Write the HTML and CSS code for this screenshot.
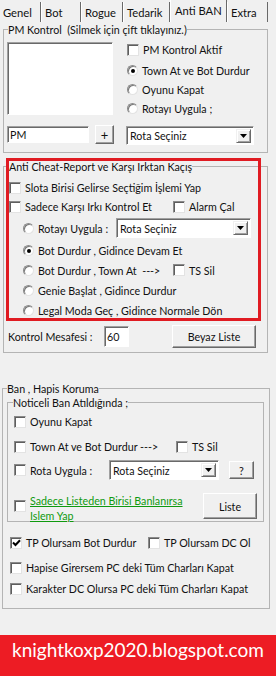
FILE: index.html
```html
<!DOCTYPE html>
<html lang="tr">
<head>
    <meta charset="UTF-8">
    <title>Anti BAN</title>
    <link rel="stylesheet" href="styles.css">
</head>
<body>
    <div class="tabs">
        <span class="tab">Genel</span>
        <span class="tab">Bot</span>
        <span class="tab">Rogue</span>
        <span class="tab">Tedarik</span>
        <span class="tab active">Anti BAN</span>
        <span class="tab">Extra</span>
    </div>

    <div class="page">
        <!-- PM kontrol -->
        <fieldset class="group pm">
            <legend>PM Kontrol&nbsp; (Silmek için çift tıklayınız.)</legend>
            <div class="pm-top">
                <div class="listbox"></div>
                <div class="opts">
                    <div class="row first"><span class="cb"></span>PM Kontrol Aktif</div>
                    <div class="row"><span class="rd on"></span>Town At ve Bot Durdur</div>
                    <div class="row"><span class="rd"></span>Oyunu Kapat</div>
                    <div class="row"><span class="rd"></span>Rotayı Uygula ;</div>
                </div>
            </div>
            <div class="pm-bottom">
                <span class="edit pm-edit">PM</span>
                <span class="btn plus">+</span>
                <span class="combo pm-combo">
                    <span class="combo-text">Rota Seçiniz</span>
                    <span class="drop"><svg width="7" height="4" viewBox="0 0 7 4"><path d="M0 0h7L3.5 4z"/></svg></span>
                </span>
            </div>
        </fieldset>

        <!-- anti cheat -->
        <fieldset class="group anti">
            <legend>Anti Cheat-Report ve Karşı Irktan Kaçış</legend>
            <div class="row chk"><span class="cb"></span>Slota Birisi Gelirse Seçtiğim İşlemi Yap</div>
            <div class="row chk">
                <span class="cell w-anti"><span class="cb"></span>Sadece Karşı Irkı Kontrol Et</span>
                <span class="cb"></span>Alarm Çal
            </div>
            <div class="row radio combo-row">
                <span class="cell w-rota"><span class="rd"></span>Rotayı Uygula :</span>
                <span class="combo anti-combo">
                    <span class="combo-text">Rota Seçiniz</span>
                    <span class="drop"><svg width="7" height="4" viewBox="0 0 7 4"><path d="M0 0h7L3.5 4z"/></svg></span>
                </span>
            </div>
            <div class="row radio"><span class="rd on"></span>Bot Durdur , Gidince Devam Et</div>
            <div class="row radio">
                <span class="cell w-town"><span class="rd"></span>Bot Durdur , Town At&nbsp; ---&gt;</span>
                <span class="cb"></span>TS Sil
            </div>
            <div class="row radio"><span class="rd"></span>Genie Başlat , Gidince Durdur</div>
            <div class="row radio"><span class="rd"></span>Legal Moda Geç , Gidince Normale Dön</div>
            <div class="mesafe">
                <span class="mesafe-label">Kontrol Mesafesi :</span>
                <span class="edit mesafe-edit">60</span>
                <span class="btn beyaz">Beyaz Liste</span>
            </div>
        </fieldset>

        <!-- ban / hapis -->
        <fieldset class="group ban">
            <legend>Ban , Hapis Koruma</legend>
            <fieldset class="group noticeli">
                <legend>Noticeli Ban Atıldığında ;</legend>
                <div class="row n1"><span class="cb"></span>Oyunu Kapat</div>
                <div class="row n2">
                    <span class="cell w-ntown"><span class="cb"></span>Town At ve Bot Durdur ---&gt;</span>
                    <span class="cb"></span>TS Sil
                </div>
                <div class="row n3">
                    <span class="cell w-nrota"><span class="cb"></span>Rota Uygula :</span>
                    <span class="combo ban-combo">
                        <span class="combo-text">Rota Seçiniz</span>
                        <span class="drop"><svg width="7" height="4" viewBox="0 0 7 4"><path d="M0 0h7L3.5 4z"/></svg></span>
                    </span>
                    <span class="btn soru">?</span>
                </div>
                <div class="row n4">
                    <span class="cb"></span>
                    <a class="link">Sadece Listeden Birisi Banlanırsa <br>Islem Yap</a>
                    <span class="btn liste">Liste</span>
                </div>
            </fieldset>
            <div class="row b1">
                <span class="cell w-tp"><span class="cb on"><svg width="9" height="8" viewBox="0 0 9 8"><path d="M1 3.5l2.5 2.5L8 1.2" fill="none" stroke="#000" stroke-width="2"/></svg></span>TP Olursam Bot Durdur</span>
                <span class="cb"></span>TP Olursam DC Ol
            </div>
            <div class="row b2"><span class="cb"></span>Hapise Girersem PC deki Tüm Charları Kapat</div>
            <div class="row b3"><span class="cb"></span>Karakter DC Olursa PC deki Tüm Charları Kapat</div>
        </fieldset>

        <div class="redbox"></div>
    </div>

    <div class="banner">knightkoxp2020.blogspot.com</div>
</body>
</html>
```

FILE: styles.css
```css
* {
    box-sizing: border-box;
}
body {
    margin: 0;
    width: 276px;
    height: 676px;
    overflow: hidden;
    background: #f0f0f0;
    font-family: Lato, "Open Sans", sans-serif;
    font-size: 10.7px;
    color: #111;
}

/* tabs */
.tabs {
    display: flex;
    height: 22px;
    font-size: 11.2px;
}
.tab {
    height: 20px;
    margin-top: 2px;
    padding: 3px 0 0 3px;
    line-height: 16px;
    border-left: 1px solid #fff;
    border-right: 1px solid #696969;
}
.tab:nth-child(1) { width: 41px; border-left: none; }
.tab:nth-child(2) { width: 40px; }
.tab:nth-child(3) { width: 42px; }
.tab:nth-child(4) { width: 47px; }
.tab:nth-child(5) { width: 57px; }
.tab:nth-child(6) { width: 41px; }
.tab.active {
    height: 22px;
    margin-top: 0;
    padding-top: 3px;
    padding-left: 4px;
}

.page {
    position: relative;
    padding: 0 0 0 3px;
}

/* group boxes */
.group {
    margin: 0;
    border: 1px solid #b4b4b4;
    min-width: 0;
}
.group legend {
    padding: 0;
    line-height: 15px;
}

.row {
    display: flex;
    align-items: center;
    height: 19px;
    white-space: nowrap;
}
.cell {
    display: flex;
    align-items: center;
}

/* controls */
.cb {
    display: inline-flex;
    align-items: center;
    justify-content: center;
    flex: none;
    width: 12px;
    height: 12px;
    margin-right: 4px;
    background: #fff;
    border: 1px solid;
    border-color: #8a8a8a #e3e3e3 #e3e3e3 #8a8a8a;
    box-shadow: inset 1px 1px 0 #5e5e5e;
}
.rd {
    position: relative;
    flex: none;
    width: 11px;
    height: 11px;
    margin-right: 4px;
    border-radius: 50%;
    background: #fff;
    border: 1px solid;
    border-color: #8a8a8a #e3e3e3 #e3e3e3 #8a8a8a;
    box-shadow: inset 1px 1px 0 #7a7a7a;
}
.rd.on::after {
    content: "";
    position: absolute;
    left: 3px;
    top: 3px;
    width: 4px;
    height: 4px;
    border-radius: 50%;
    background: #000;
}
.edit,
.listbox {
    display: flex;
    align-items: center;
    padding-left: 2px;
    background: #fff;
    border: 1px solid;
    border-color: #a0a0a0 #fff #fff #a0a0a0;
    box-shadow: inset 1px 1px 0 #696969;
}
.btn {
    display: flex;
    align-items: center;
    justify-content: center;
    flex: none;
    background: #f0f0f0;
    border: 1px solid;
    border-color: #fff #696969 #696969 #fff;
    box-shadow: inset -1px -1px 0 #a0a0a0;
}
.combo {
    display: flex;
    align-items: center;
    flex: none;
    height: 20px;
    padding: 2px 2px 2px 3px;
    background: #fff;
    border: 1px solid;
    border-color: #a0a0a0 #fff #fff #a0a0a0;
    box-shadow: inset 1px 1px 0 #696969;
}
.combo-text {
    flex: 1;
}
.drop {
    display: flex;
    align-items: center;
    justify-content: center;
    width: 15px;
    height: 14px;
    background: #f0f0f0;
    border: 1px solid;
    border-color: #f0f0f0 #696969 #696969 #f0f0f0;
    box-shadow: inset 1px 1px 0 #fff, inset -1px -1px 0 #a0a0a0;
}

/* PM kontrol */
.pm {
    width: 265px;
    padding: 5px 4px 7px 3px;
}
.pm legend {
    margin-left: 1px;
}
.pm-top {
    display: flex;
}
.listbox {
    width: 106px;
    height: 73px;
}
.opts {
    margin: -2px 0 0 14px;
}
.opts .row.first {
    margin-bottom: 2px;
}
.pm-bottom {
    display: flex;
    align-items: flex-start;
    margin-top: 7px;
}
.pm-edit {
    width: 82px;
    height: 17px;
    margin-top: 1px;
}
.plus {
    width: 19px;
    height: 19px;
    margin-left: 6px;
    font-size: 13px;
}
.pm-combo {
    width: 128px;
    height: 19px;
    margin: 1px 0 0 12px;
}

/* anti cheat */
.anti {
    width: 265px;
    margin-top: 6px;
    padding: 4px 4px 4px 5px;
}
.w-anti {
    width: 164px;
}
.row.radio {
    height: 20px;
    padding-left: 14px;
}
.combo-row {
    margin-top: 2px;
}
.combo-row + .row {
    margin-top: 2px;
}
.row.radio:last-of-type {
    height: 19px;
}
.w-rota {
    width: 93px;
}
.anti-combo {
    width: 135px;
}
.w-town {
    width: 150px;
}
.mesafe {
    display: flex;
    align-items: center;
    margin-top: 5px;
    height: 23px;
}
.mesafe-label {
    width: 95px;
    margin-left: -1px;
    padding-left: 0;
}
.mesafe-edit {
    width: 25px;
    height: 21px;
    margin-left: 1px;
}
.beyaz {
    width: 84px;
    height: 23px;
    margin-left: 43px;
}

/* ban */
.ban {
    width: 268px;
    margin: 28px 0 0 -1px;
    padding: 0 4px 10px 4px;
}
.noticeli {
    width: 257px;
    margin-top: -1px;
    padding: 2px 6px 2px 6px;
}
.noticeli legend {
    margin-left: -1px;
}
.n2 {
    margin-top: 6px;
}
.w-ntown {
    width: 162px;
}
.n3 {
    height: 20px;
    margin-top: 4px;
}
.w-nrota {
    width: 95px;
}
.ban-combo {
    width: 110px;
}
.soru {
    width: 25px;
    height: 18px;
    margin-left: 10px;
}
.n4 {
    height: 26px;
    margin-top: 13px;
}
.link {
    width: 170px;
    line-height: 15px;
    margin-top: 4px;
    color: #0f9a0f;
    text-decoration: underline;
    white-space: nowrap;
}
.liste {
    width: 54px;
    height: 26px;
    margin-left: 16px;
}
.b1,
.b2,
.b3 {
    padding-left: 3px;
}
.b1 {
    margin-top: 11px;
}
.w-tp {
    width: 138px;
}
.b2 {
    margin-top: 6px;
}
.b3 {
    margin-top: 2px;
}

/* red annotation frame */
.redbox {
    position: absolute;
    left: 6px;
    top: 136px;
    width: 255px;
    height: 163px;
    border: 3px solid #e01b22;
}

.banner {
    margin-top: 26px;
    height: 50px;
    padding: 3px 0 0 12px;
    background: #ed1c24;
    color: #fff;
    font-size: 19px;
    line-height: 24px;
}
```
